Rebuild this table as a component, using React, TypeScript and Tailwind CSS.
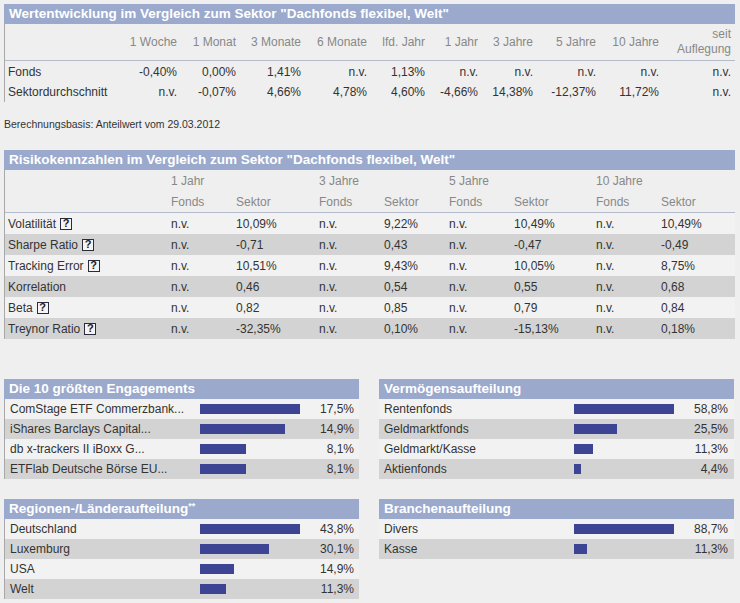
import React from "react";

const perfHeaders = ["1 Woche", "1 Monat", "3 Monate", "6 Monate", "lfd. Jahr", "1 Jahr", "3 Jahre", "5 Jahre", "10 Jahre"];

const perfRows = [
  { name: "Fonds", values: ["-0,40%", "0,00%", "1,41%", "n.v.", "1,13%", "n.v.", "n.v.", "n.v.", "n.v.", "n.v."] },
  { name: "Sektordurchschnitt", values: ["n.v.", "-0,07%", "4,66%", "4,78%", "4,60%", "-4,66%", "14,38%", "-12,37%", "11,72%", "n.v."] },
];

const riskRows = [
  { name: "Volatilität", help: true, values: ["n.v.", "10,09%", "n.v.", "9,22%", "n.v.", "10,49%", "n.v.", "10,49%"] },
  { name: "Sharpe Ratio", help: true, values: ["n.v.", "-0,71", "n.v.", "0,43", "n.v.", "-0,47", "n.v.", "-0,49"] },
  { name: "Tracking Error", help: true, values: ["n.v.", "10,51%", "n.v.", "9,43%", "n.v.", "10,05%", "n.v.", "8,75%"] },
  { name: "Korrelation", help: false, values: ["n.v.", "0,46", "n.v.", "0,54", "n.v.", "0,55", "n.v.", "0,68"] },
  { name: "Beta", help: true, values: ["n.v.", "0,82", "n.v.", "0,85", "n.v.", "0,79", "n.v.", "0,84"] },
  { name: "Treynor Ratio", help: true, values: ["n.v.", "-32,35%", "n.v.", "0,10%", "n.v.", "-15,13%", "n.v.", "0,18%"] },
];

const perfCols = "grid grid-cols-[110px_62px_59px_65px_66px_58px_53px_55px_63px_63px_72px]";
const riskCols = "grid grid-cols-[166px_65px_83px_65px_65px_65px_82px_65px_74px]";

type Item = { name: string; value: string; pct: number };

const engagements: Item[] = [
  { name: "ComStage ETF Commerzbank...", value: "17,5%", pct: 17.5 },
  { name: "iShares Barclays Capital...", value: "14,9%", pct: 14.9 },
  { name: "db x-trackers II iBoxx G...", value: "8,1%", pct: 8.1 },
  { name: "ETFlab Deutsche Börse EU...", value: "8,1%", pct: 8.1 },
];

const vermoegen: Item[] = [
  { name: "Rentenfonds", value: "58,8%", pct: 58.8 },
  { name: "Geldmarktfonds", value: "25,5%", pct: 25.5 },
  { name: "Geldmarkt/Kasse", value: "11,3%", pct: 11.3 },
  { name: "Aktienfonds", value: "4,4%", pct: 4.4 },
];

const regionen: Item[] = [
  { name: "Deutschland", value: "43,8%", pct: 43.8 },
  { name: "Luxemburg", value: "30,1%", pct: 30.1 },
  { name: "USA", value: "14,9%", pct: 14.9 },
  { name: "Welt", value: "11,3%", pct: 11.3 },
];

const branchen: Item[] = [
  { name: "Divers", value: "88,7%", pct: 88.7 },
  { name: "Kasse", value: "11,3%", pct: 11.3 },
];

function Title({ children }: { children: React.ReactNode }) {
  return (
    <div className="h-[20px] bg-[#9aa9cc] pl-[5px] text-[13.5px] font-bold leading-[20px] text-white">
      {children}
    </div>
  );
}

function Help() {
  return (
    <span className="ml-[4px] inline-flex h-[12px] w-[12px] items-center justify-center border border-[#2b2b3b] bg-[#f4f4f4] text-[11px] font-bold leading-none text-[#1a1a2a]">
      ?
    </span>
  );
}

function BarPanel({ title, items, border }: { title: React.ReactNode; items: Item[]; border?: boolean }) {
  const max = Math.max(...items.map((i) => i.pct));
  return (
    <div className="w-[355px]">
      <Title>{title}</Title>
      <div className={border ? "border-l border-[#a8a8a8]" : ""}>
        {items.map((item, idx) => (
          <div
            key={item.name}
            className={`grid h-[20px] grid-cols-[195px_100px_60px] items-center ${idx % 2 ? "bg-[#d3d3d3]" : "bg-[#f2f2f2]"}`}
          >
            <span className="truncate pl-[5px]">{item.name}</span>
            <div className="flex h-[10px] items-center">
              <div className="h-[10px] bg-[#3c4493]" style={{ width: Math.round((item.pct / max) * 100) }} />
            </div>
            <span className="pr-[6px] text-right">{item.value}</span>
          </div>
        ))}
      </div>
    </div>
  );
}

export default function App() {
  return (
    <div className="h-[603px] w-[740px] overflow-hidden bg-[#efefef] pl-[4px] pt-[4px] font-['Liberation_Sans',Arial,sans-serif] text-[12px] text-[#333]">
      <section className="w-[731px]">
        <Title>Wertentwicklung im Vergleich zum Sektor "Dachfonds flexibel, Welt"</Title>
        <div className="border-l border-[#a8a8a8]">
          <div className={`${perfCols} h-[37px] items-center border-b border-[#b3bbcc] text-[#888]`}>
            <span />
            {perfHeaders.map((h) => (
              <span key={h} className="text-right">{h}</span>
            ))}
            <span className="text-right leading-[15px]">
              seit
              <br />
              Auflegung
            </span>
          </div>
          <div className="pt-[1px]">
            {perfRows.map((row) => (
              <div key={row.name} className={`${perfCols} h-[20px] items-center`}>
                <span className="pl-[3px]">{row.name}</span>
                {row.values.map((v, i) => (
                  <span key={i} className="text-right">{v}</span>
                ))}
              </div>
            ))}
          </div>
        </div>
      </section>

      <p className="mt-[16px] h-[12px] text-[10.5px] leading-[12px]">Berechnungsbasis: Anteilwert vom 29.03.2012</p>

      <section className="mt-[20px] w-[731px]">
        <Title>Risikokennzahlen im Vergleich zum Sektor "Dachfonds flexibel, Welt"</Title>
        <div className="border-l border-[#a8a8a8]">
          <div className="border-b border-[#b3bbcc] text-[#888]">
            <div className={`${riskCols} h-[21px] items-center`}>
              <span />
              <span>1 Jahr</span>
              <span />
              <span>3 Jahre</span>
              <span />
              <span>5 Jahre</span>
              <span />
              <span>10 Jahre</span>
              <span />
            </div>
            <div className={`${riskCols} h-[21px] items-center`}>
              <span />
              {["Fonds", "Sektor", "Fonds", "Sektor", "Fonds", "Sektor", "Fonds", "Sektor"].map((h, i) => (
                <span key={i}>{h}</span>
              ))}
            </div>
          </div>
          {riskRows.map((row, idx) => (
            <div
              key={row.name}
              className={`${riskCols} h-[21px] items-center ${idx % 2 ? "bg-[#d3d3d3]" : "bg-[#f2f2f2]"}`}
            >
              <span className="flex items-center pl-[3px]">
                {row.name}
                {row.help && <Help />}
              </span>
              {row.values.map((v, i) => (
                <span key={i}>{v}</span>
              ))}
            </div>
          ))}
        </div>
      </section>

      <div className="mt-[40px] flex gap-[20px]">
        <BarPanel title="Die 10 größten Engagements" items={engagements} border />
        <BarPanel title="Vermögensaufteilung" items={vermoegen} />
      </div>

      <div className="mt-[20px] flex gap-[20px]">
        <BarPanel
          title={
            <>
              Regionen-/Länderaufteilung<sup className="text-[9px]">**</sup>
            </>
          }
          items={regionen}
          border
        />
        <BarPanel title="Branchenaufteilung" items={branchen} />
      </div>
    </div>
  );
}
